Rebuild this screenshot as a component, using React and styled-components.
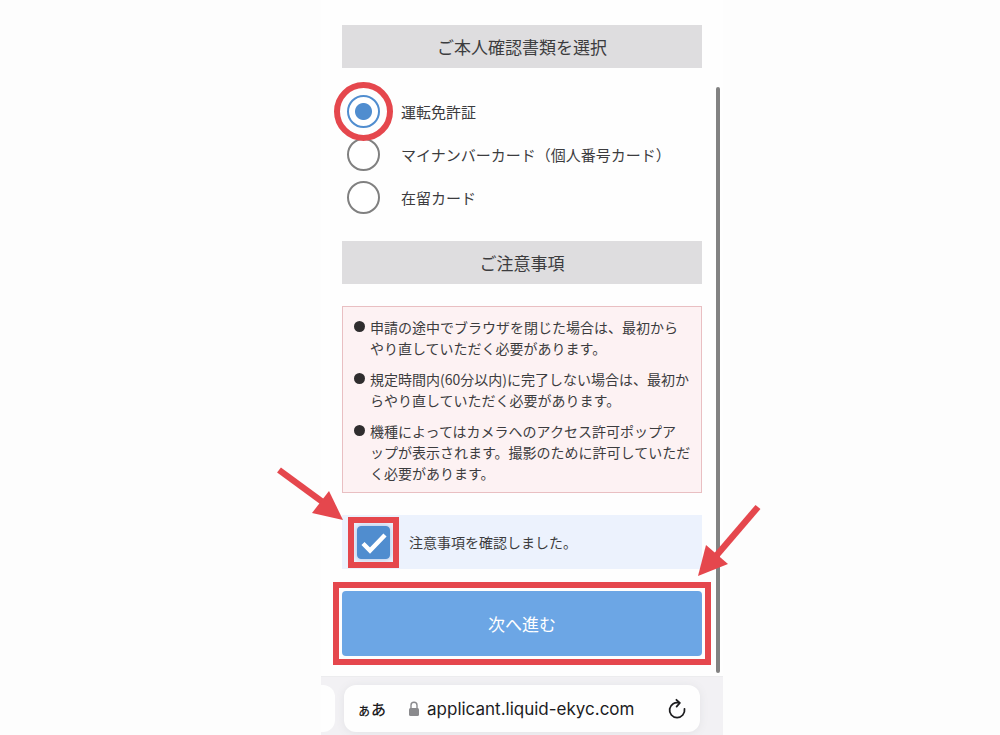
import React, { useState } from 'react'
import styled, { createGlobalStyle } from 'styled-components'

const red = '#e5474d'

const GlobalStyle = createGlobalStyle`
  * {
    box-sizing: border-box;
  }
  body {
    margin: 0;
    background: #fdfdfd;
    color: #3c3c3e;
    font-family: 'Noto Sans CJK JP', sans-serif;
  }
`

const Page = styled.div`
  min-height: 100vh;
  padding-left: 44px;
  display: flex;
  justify-content: center;
  overflow: hidden;
`

const Phone = styled.div`
  position: relative;
  width: 100%;
  max-width: 402px;
  display: flex;
  flex-direction: column;
`

const Screen = styled.main`
  background: #fefefe;
  padding: 25px 21px 20px;
  display: flex;
  flex-direction: column;
  gap: 22px;
`

const Heading = styled.h2`
  margin: 0;
  padding: 9px 0;
  background: #dedddf;
  font-size: 17px;
  line-height: 25px;
  font-weight: 400;
  text-align: center;
`

const Options = styled.div`
  display: flex;
  flex-direction: column;
`

const Option = styled.label`
  display: flex;
  align-items: center;
  gap: 21px;
  height: 43px;
  padding-left: 5px;
  font-size: 15px;
  cursor: pointer;
`

const Control = styled.span`
  position: relative;
  display: flex;
`

const Radio = styled.input`
  appearance: none;
  margin: 0;
  width: 33px;
  height: 33px;
  border: 2px solid #808080;
  border-radius: 50%;
  background: #fff;
  &:checked {
    border-color: #508dcf;
    background: radial-gradient(circle, #508dcf 8px, #fff 9px);
  }
`

const Mark = styled.span`
  position: absolute;
  z-index: 1;
  inset: -${props => props.$gap}px;
  border: 6px solid ${red};
  border-radius: ${props => (props.$round ? '50%' : '0')};
  pointer-events: none;
`

const Notice = styled.ul`
  margin: 0;
  padding: 10px 8px 8px 11px;
  border: 1px solid #e9bfc2;
  background: #fdf2f3;
  list-style: none;
  display: flex;
  flex-direction: column;
  gap: 10px;
`

const NoticeItem = styled.li`
  display: flex;
  gap: 5px;
  font-size: 14px;
  line-height: 21px;
  white-space: nowrap;
  &::before {
    content: '';
    flex: none;
    width: 11px;
    height: 11px;
    margin-top: 4px;
    border-radius: 50%;
    background: #2f2d2e;
  }
`

const Confirm = styled.div`
  position: relative;
  background: #ecf2fd;
`

const ConfirmLabel = styled.label`
  display: flex;
  align-items: center;
  gap: 19px;
  height: 54px;
  padding-left: 15px;
  font-size: 14px;
  cursor: pointer;
`

const Checkbox = styled.input`
  appearance: none;
  margin: 0;
  width: 33px;
  height: 33px;
  border: 1px solid #508dcf;
  border-radius: 4px;
  background: #fff;
  box-shadow: 0 0 6px #a9bfe2;
  &:checked {
    background: #508dcf;
  }
`

const Tick = styled.svg`
  position: absolute;
  inset: 0;
  pointer-events: none;
`

const Action = styled.div`
  position: relative;
`

const NextButton = styled.button`
  display: block;
  width: 100%;
  height: 65px;
  border: 0;
  border-radius: 4px;
  background: #6ca6e5;
  color: #fff;
  font-family: inherit;
  font-size: 17px;
  cursor: pointer;
`

const ArrowLeft = styled.svg`
  position: absolute;
  left: -66px;
  top: -50px;
  z-index: 2;
  pointer-events: none;
`

const ArrowRight = styled.svg`
  position: absolute;
  right: -62px;
  top: -88px;
  z-index: 2;
  pointer-events: none;
`

const ScrollThumb = styled.span`
  position: absolute;
  top: 87px;
  bottom: 62px;
  right: 3px;
  width: 4px;
  border-radius: 2px;
  background: #828282;
`

const BrowserBar = styled.footer`
  flex: 1;
  display: flex;
  gap: 9px;
  padding: 8px 23px 3px 0;
  border-top: 1px solid #ececee;
  background: #f2f1f4;
`

const PrevTab = styled.div`
  width: 14px;
  height: 47px;
  border-radius: 0 12px 12px 0;
  background: #fefefe;
`

const AddressBar = styled.div`
  flex: 1;
  height: 47px;
  padding: 0 14px 0 13px;
  display: flex;
  align-items: center;
  border-radius: 12px;
  background: #fefefe;
  box-shadow: 0 1px 8px #e2e2e5;
  color: #1c1c1e;
`

const BarButton = styled.button`
  display: flex;
  align-items: baseline;
  padding: 0;
  border: 0;
  background: none;
  color: inherit;
  font-family: inherit;
  font-size: 15px;
  font-weight: 500;
  cursor: pointer;
  small {
    font-size: 14px;
  }
`

const Address = styled.a`
  flex: 1;
  display: flex;
  align-items: center;
  gap: 8px;
  padding-left: 23px;
  color: inherit;
  font-family: Inter, sans-serif;
  font-size: 17px;
  text-decoration: none;
`

const documents = ['運転免許証', 'マイナンバーカード（個人番号カード）', '在留カード']

const notices = [
  ['申請の途中でブラウザを閉じた場合は、最初から', 'やり直していただく必要があります。'],
  ['規定時間内(60分以内)に完了しない場合は、最初か', 'らやり直していただく必要があります。'],
  ['機種によってはカメラへのアクセス許可ポップア', 'ップが表示されます。撮影のために許可していただ', 'く必要があります。'],
]

const App = () => {
  const [selected, setSelected] = useState(0)
  const [confirmed, setConfirmed] = useState(true)

  return (
    <Page>
      <GlobalStyle />
      <Phone>
        <Screen>
          <Heading>ご本人確認書類を選択</Heading>
          <Options role="radiogroup">
            {documents.map((name, i) => (
              <Option key={name}>
                <Control>
                  <Radio type="radio" name="document" checked={selected === i} onChange={() => setSelected(i)} />
                  {i === 0 && <Mark $gap={13} $round />}
                </Control>
                {name}
              </Option>
            ))}
          </Options>

          <Heading>ご注意事項</Heading>
          <Notice>
            {notices.map(lines => (
              <NoticeItem key={lines[0]}>
                <span>
                  {lines.map((line, i) => (
                    <React.Fragment key={line}>
                      {i > 0 && <br />}
                      {line}
                    </React.Fragment>
                  ))}
                </span>
              </NoticeItem>
            ))}
          </Notice>

          <Confirm>
            <ConfirmLabel>
              <Control>
                <Checkbox type="checkbox" checked={confirmed} onChange={e => setConfirmed(e.target.checked)} />
                {confirmed && (
                  <Tick width="33" height="33" viewBox="0 0 33 33" fill="none" aria-hidden="true">
                    <path d="M6 17.5L13 24.5L28 9" stroke="#fff" strokeWidth="4.4" />
                  </Tick>
                )}
                <Mark $gap={9} />
              </Control>
              注意事項を確認しました。
            </ConfirmLabel>
            <ArrowLeft width="68" height="56" viewBox="0 0 68 56" aria-hidden="true">
              <path d="M3 5L48 38" stroke={red} strokeWidth="6.5" />
              <path d="M67 55L53 26L36 48Z" fill={red} />
            </ArrowLeft>
          </Confirm>

          <Action>
            <NextButton type="button">次へ進む</NextButton>
            <Mark $gap={9} />
            <ArrowRight width="68" height="76" viewBox="0 0 68 76" aria-hidden="true">
              <path d="M62 4L20 53" stroke={red} strokeWidth="6.5" />
              <path d="M2 73L10 42L32 61Z" fill={red} />
            </ArrowRight>
          </Action>
        </Screen>

        <BrowserBar>
          <PrevTab />
          <AddressBar>
            <BarButton type="button"><small>ぁ</small>あ</BarButton>
            <Address href="#">
              <svg width="10" height="16" viewBox="0 0 10 16" aria-hidden="true">
                <path d="M2 8V4.2a3 3 0 0 1 6 0V8" fill="none" stroke="#8a8a8d" strokeWidth="1.4" />
                <rect y="7" width="10" height="8" rx="1.5" fill="#8a8a8d" />
              </svg>
              applicant.liquid-ekyc.com
            </Address>
            <BarButton type="button" aria-label="再読み込み">
              <svg width="18" height="22" viewBox="0 0 18 22" fill="none" stroke="currentColor" strokeWidth="1.8" strokeLinecap="round" strokeLinejoin="round" aria-hidden="true">
                <path d="M11.4 5A7.5 7.5 0 1 0 16.5 11" />
                <path d="M8.4 1.8L11.8 5L8.6 8.6" />
              </svg>
            </BarButton>
          </AddressBar>
        </BrowserBar>
        <ScrollThumb />
      </Phone>
    </Page>
  )
}

export default App
